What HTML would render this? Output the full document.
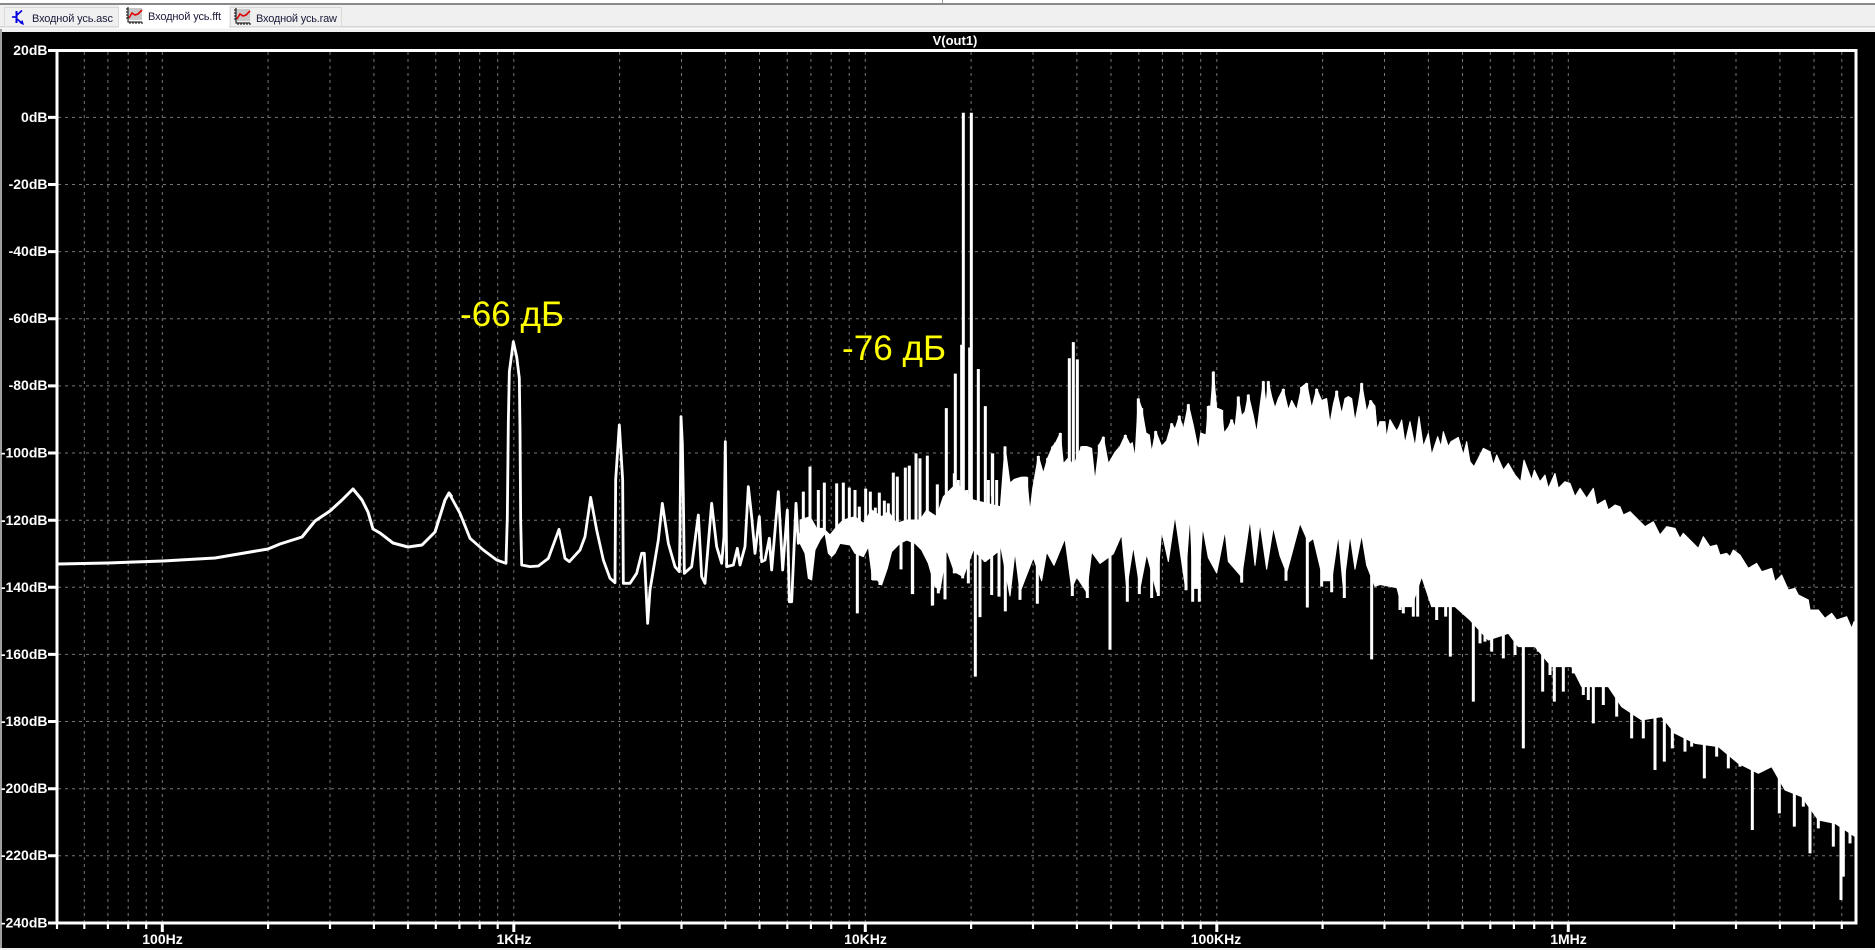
<!DOCTYPE html>
<html><head><meta charset="utf-8"><title>V(out1)</title>
<style>
html,body{margin:0;padding:0;background:#000;width:1875px;height:950px;overflow:hidden}
svg{display:block}
.s{vector-effect:non-scaling-stroke}
</style></head><body>
<svg xmlns="http://www.w3.org/2000/svg" width="1875" height="950" viewBox="0 0 1875 950">
<rect width="1875" height="950" fill="#000"/>
<!-- top chrome -->
<rect y="0" width="1875" height="32" fill="#f0f0f0"/>
<rect y="0" width="1875" height="3" fill="#fff"/>
<rect y="3" width="1875" height="2" fill="#8a8a8a"/>
<rect x="942" y="0" width="1" height="3" fill="#999"/>
<rect y="26" width="1875" height="1.5" fill="#d4d4d4"/>
<rect y="27.5" width="1875" height="1.5" fill="#fafafa"/>
<rect x="0" y="29" width="2" height="919" fill="#a0a0a0"/>
<rect y="948" width="1875" height="2" fill="#f0f0f0"/>
<!-- tabs -->
<rect x="4.5" y="7.5" width="114" height="19" fill="#f0f0f0" stroke="#d9d9d9"/>
<rect x="230.5" y="7.5" width="111" height="19" fill="#f0f0f0" stroke="#d9d9d9"/>
<rect x="119" y="5" width="110" height="23" fill="#fff"/>
<g font-family="'Liberation Sans','Noto Sans CJK SC',sans-serif" font-size="11" fill="#1a1a3a">
<text x="32" y="22" textLength="81">Входной усь.asc</text>
<text x="148" y="20" textLength="73">Входной усь.fft</text>
<text x="256" y="22" textLength="81">Входной усь.raw</text>
</g>
<!-- transistor icon -->
<g fill="none" stroke="#0000e0" stroke-width="1.6">
<path d="M12 17H16"/><path d="M16.5 11V23" stroke-width="2"/><path d="M17 15L22 10.5"/><path d="M17 19L23 24"/>
</g>
<path d="M24 25L19.5 23L22.5 20Z" fill="#0000e0"/>
<!-- chart icons -->
<g>
<rect x="128" y="8" width="14" height="12" fill="#c8c8c8"/>
<path d="M128 7V22H142M126 9H128M126 12H128M126 15H128M126 18H128M130 22V24M133 22V24M136 22V24M139 22V24M142 22V24" stroke="#000" fill="none"/>
<path d="M129 18L132 13L135 15L138 14L142 10" stroke="#e00000" stroke-width="1.6" fill="none"/>
</g>
<g transform="translate(108,1)">
<rect x="128" y="8" width="14" height="12" fill="#c8c8c8"/>
<path d="M128 7V22H142M126 9H128M126 12H128M126 15H128M126 18H128M130 22V24M133 22V24M136 22V24M139 22V24M142 22V24" stroke="#000" fill="none"/>
<path d="M129 18L132 13L135 15L138 14L142 10" stroke="#e00000" stroke-width="1.6" fill="none"/>
</g>
<!-- grid -->
<g stroke="#767676" stroke-width="1" stroke-dasharray="3 4" fill="none">
<path d="M84.3 52V922M107.9 52V922M128.2 52V922M146.2 52V922M162.3 52V922M268.1 52V922M330 52V922M373.9 52V922M408 52V922M435.8 52V922M459.4 52V922M479.7 52V922M497.7 52V922M513.8 52V922M619.6 52V922M681.5 52V922M725.4 52V922M759.5 52V922M787.3 52V922M810.9 52V922M831.2 52V922M849.2 52V922M865.3 52V922M971.1 52V922M1033 52V922M1076.9 52V922M1111 52V922M1138.8 52V922M1162.4 52V922M1182.7 52V922M1200.7 52V922M1216.8 52V922M1322.6 52V922M1384.5 52V922M1428.4 52V922M1462.5 52V922M1490.3 52V922M1513.9 52V922M1534.2 52V922M1552.2 52V922M1568.3 52V922M1674.1 52V922M1736 52V922M1779.9 52V922M1814 52V922M1841.8 52V922"/>
<path d="M58 117.4H1855M58 184.5H1855M58 251.6H1855M58 318.8H1855M58 385.9H1855M58 453H1855M58 520.2H1855M58 587.3H1855M58 654.4H1855M58 721.5H1855M58 788.7H1855M58 855.8H1855"/>
</g>
<!-- low-frequency trace -->
<path d="M58 564L108 563L163 561L215 558L268 549L280 544L302 537L315 521L330 511L342 500L353 489L362 500L368 512L373 529L380 533L393 543L408 547L422 545L435 532L445 500L449 493L452 497" fill="none" stroke="#fff" stroke-width="3" stroke-linejoin="round"/>
<g transform="translate(450,290) scale(.33333)" fill="#fff" stroke="#fff">
<path class="s" stroke-width="2.8" stroke-linejoin="round" fill="none" d="M0 615L30 670L60 745L100 780L140 810L168 820L172 680L175 395L178 245L190 155L200 200L208 265L210 420L212 690L215 825L240 830L265 828L295 805L327 718L345 805L358 815L390 780L405 740L422 622L440 720L460 810L480 865L495 878L497 570L508 405L518 570L520 880L540 880L560 850L575 790L583 790L593 1000L600 900L625 750L637 640L655 760L675 830L688 845L690 730L693 380L697 460L700 620L703 850L725 830L745 675L755 860L765 880L785 640L800 770L815 820L822 740L826 455L830 830L850 825L862 775L870 825L885 770L895 590L905 680L915 790L928 680L935 815L945 810L958 745L965 840L985 605L998 840L1012 660L1018 935L1025 935L1038 640L1045 760L1052 730"/>
</g>
<!-- band 800-1000 -->
<g transform="translate(800,440) scale(.33333)" fill="#fff" stroke="#fff">
<polygon class="s" stroke-width="1" stroke-linejoin="round" points="0,240 30,230 50,265 70,265 90,285 110,260 130,240 165,230 190,250 215,210 245,230 265,215 290,250 320,240 360,240 380,210 410,230 430,170 470,130 520,180 600,200 600,330 575,350 555,365 520,330 490,410 463,395 440,330 420,450 405,440 385,370 365,330 345,310 320,300 300,310 275,335 262,385 245,435 232,420 218,420 205,320 190,350 165,340 150,315 120,310 105,340 95,350 85,340 75,280 60,300 45,330 35,420 25,415 15,340 0,310"/>
<path class="s" stroke-width="3" fill="none" d="M10 155V300M30 80V300M55 150V280M73 128V280M110 130V300M130 128V290M148 143V300M165 150V300M178 200V330M197 146V300M211 155V300M226 203V300M238 158V300M253 182V300M265 190V290M280 98V300M292 110V300M316 83V280M328 77V280M348 40V290M360 55V290M382 47V300M412 133V300M463 100V200M475 120V200M500 150V200M520 180V250M550 200V250M578 40V250M565 120V250M590 120V250M172 520V300M218 420V340M240 435V340M303 388V300M337 462V300M398 495V400M415 460V400M435 478V330M463 400V300M488 415V300M505 430V300M575 465V300M597 470V300M555 365V300"/>
</g>
<!-- mid band -->
<g transform="translate(900,89.7) scale(.33333,.3836)" fill="#fff" stroke="#fff">
<polygon class="s" stroke-width="1" stroke-linejoin="round" points="300,1100 315,930 330,1025 345,1015 365,1010 380,1010 390,1100 398,1040 415,955 430,1000 443,960 458,930 467,920 481,895 490,975 505,960 520,980 545,930 560,930 575,935 585,1020 598,925 610,905 625,975 645,945 660,930 676,900 690,925 697,920 705,960 715,805 725,830 738,895 748,900 755,945 767,890 785,930 800,915 815,870 825,885 838,850 850,885 865,820 880,875 895,940 902,895 918,900 925,825 932,825 940,735 950,830 965,835 972,895 985,880 995,860 1005,880 1015,800 1025,850 1035,840 1045,795 1060,850 1070,895 1080,825 1090,760 1098,820 1105,760 1115,800 1125,830 1135,805 1150,780 1165,835 1175,810 1190,835 1205,775 1220,765 1235,830 1250,780 1265,810 1280,805 1290,870 1300,820 1310,785 1325,845 1335,805 1345,800 1355,805 1365,865 1375,820 1385,765 1400,840 1412,810 1425,825 1430,890 1440,865 1460,905 1470,860 1490,890 1500,875 1500,1300 1440,1290 1425,1295 1400,1240 1385,1160 1365,1250 1350,1160 1330,1300 1315,1160 1295,1280 1270,1280 1240,1170 1225,1180 1200,1130 1160,1260 1140,1215 1120,1140 1100,1250 1080,1130 1065,1240 1050,1120 1025,1270 1005,1250 985,1230 975,1150 950,1260 925,1220 908,1140 895,1300 880,1300 870,1110 855,1290 825,1110 805,1230 785,1150 770,1310 740,1210 720,1300 700,1190 680,1300 665,1160 640,1210 600,1235 575,1205 560,1310 530,1270 515,1300 495,1170 462,1240 440,1205 425,1280 400,1220 360,1310 345,1205 330,1320 300,1180"/>
<path class="s" stroke-width="3" fill="none" d="M190 60V1100M214 60V1100M166 740V1100M139 830V1100M235 728V1100M256 825V1100M185 665V1100M209 672V1100M520 658V1000M508 700V1000M532 703V1000M481 895V1060M315 930V1060M277 950V1060M226 1530V1100M630 1460V1100M1222 1350V1100M1415 1485V1100M38 1315V1150M97 1345V1150M240 1375V1150M682 1335V1150M878 1335V1150M898 1335V1150"/>
<path class="s" stroke-width="3" fill="none" d="M345 1015V1100M365 1010V1100M380 1010V1100M415 955V1100M443 960V1100M458 930V1100M467 920V1100M545 930V1100M560 930V1100M598 925V1100M610 905V1100M660 930V1100M676 900V1100M715 805V1100M725 830V1100M738 895V1100M767 890V1100M815 870V1100M838 850V1100M865 820V1100M925 825V1100M932 825V1100M940 735V1100M950 830V1100M965 835V1100M995 860V1100M1015 800V1100M1045 795V1100M1090 760V1100M1105 760V1100M1150 780V1100M1205 775V1100M1220 765V1100M1250 780V1100M1310 785V1100M1345 800V1100M1385 765V1100M1412 810V1100"/>
<path class="s" stroke-width="3" fill="none" d="M316 1360V1150M360 1330V1150M412 1340V1150M517 1320V1150M562 1325V1150M718 1315V1150M755 1325V1150M775 1320V1150M858 1305V1150M1025 1285V1150M1158 1280V1150M1265 1295V1150M1295 1310V1150M1333 1325V1150"/>
</g>
<!-- high-frequency band -->
<g transform="translate(1375,400) scale(.33333)" fill="#fff" stroke="#fff">
<polygon class="s" stroke-width="1" stroke-linejoin="round" points="0,300 0,25 8,105 15,65 30,65 35,120 45,60 65,100 80,60 90,130 105,65 120,140 132,50 145,140 160,100 170,165 188,110 198,140 205,95 220,140 228,125 250,112 265,165 275,125 285,185 297,200 325,145 345,155 355,195 365,165 385,210 400,190 420,225 437,245 447,180 470,240 478,210 495,245 510,225 520,265 540,220 550,265 570,245 585,250 600,290 615,265 635,295 655,265 665,315 690,300 700,330 720,315 735,320 745,345 765,335 810,380 835,365 855,405 875,380 900,385 915,415 925,400 970,445 985,410 1005,440 1025,435 1035,465 1055,460 1065,470 1075,450 1095,465 1120,505 1145,490 1160,515 1190,505 1200,545 1220,525 1240,570 1260,565 1270,585 1300,600 1305,630 1330,630 1350,655 1370,640 1385,660 1415,650 1430,685 1437,665 1441,668 1441,950"/>
<polygon class="s" stroke-width="1" stroke-linejoin="round" points="0,300 1441,950 1441,1310 1380,1270 1330,1260 1280,1190 1230,1170 1190,1100 1150,1120 1090,1090 1030,1040 960,1030 900,1000 860,950 800,960 740,920 700,860 620,860 590,800 530,800 480,740 430,740 400,700 340,720 285,660 240,620 200,620 170,620 140,530 110,620 80,620 60,540 0,540"/>
<path class="s" stroke-width="3" fill="none" d="M75 630v-250M85 640v-250M115 650v-250M128 650v-250M185 660v-250M212 650v-250M226 770v-250M295 905v-300M315 730v-250M330 725v-250M350 755v-250M385 775v-250M420 765v-250M445 1045v-350M490 755v-250M503 875v-250M525 825v-250M538 905v-250M565 875v-250M595 820v-250M625 885v-250M640 900v-250M655 970v-250M685 915v-250M725 950v-250M760 930v-250M770 1015v-250M805 1015v-250M818 910v-250M840 1110v-250M868 1085v-250M892 1045v-250M930 1055v-250M950 1040v-250M988 1135v-250M1025 1070v-250M1060 1105v-250M1095 1100v-250M1132 1290v-250M1195 1105v-250M1213 1240v-250M1258 1280v-250M1285 1220v-250M1305 1360v-250M1330 1285v-250M1355 1265v-250M1375 1340v-250M1398 1500v-350M1405 1430v-250M1425 1330v-250"/>
</g>
<!-- frame -->
<path d="M57 50.5H1856V923H57Z" fill="none" stroke="#fff" stroke-width="3"/>
<!-- ticks -->
<g stroke="#fff" stroke-width="3" fill="none">
<path d="M48 50.5H57M48 117.4H57M48 184.5H57M48 251.6H57M48 318.8H57M48 385.9H57M48 453H57M48 520.2H57M48 587.3H57M48 654.4H57M48 721.5H57M48 788.7H57M48 855.8H57M48 923H57"/>
<path stroke-width="2.2" d="M57 923V929M84.3 923V929M107.9 923V929M128.2 923V929M146.2 923V929M268.1 923V929M330 923V929M373.9 923V929M408 923V929M435.8 923V929M459.4 923V929M479.7 923V929M497.7 923V929M619.6 923V929M681.5 923V929M725.4 923V929M759.5 923V929M787.3 923V929M810.9 923V929M831.2 923V929M849.2 923V929M971.1 923V929M1033 923V929M1076.9 923V929M1111 923V929M1138.8 923V929M1162.4 923V929M1182.7 923V929M1200.7 923V929M1322.6 923V929M1384.5 923V929M1428.4 923V929M1462.5 923V929M1490.3 923V929M1513.9 923V929M1534.2 923V929M1552.2 923V929M1674.1 923V929M1736 923V929M1779.9 923V929M1814 923V929M1841.8 923V929"/>
<path d="M162.3 923V932M513.8 923V932M865.3 923V932M1216.8 923V932M1568.3 923V932"/>
</g>
<!-- axis labels -->
<g font-family="'Liberation Sans',sans-serif" font-weight="bold" font-size="14" fill="#fff" text-anchor="end">
<text x="47.5" y="55">20dB</text><text x="47.5" y="122">0dB</text><text x="47.5" y="189">-20dB</text><text x="47.5" y="256">-40dB</text><text x="47.5" y="323">-60dB</text><text x="47.5" y="390">-80dB</text><text x="47.5" y="457.5">-100dB</text><text x="47.5" y="525">-120dB</text><text x="47.5" y="592">-140dB</text><text x="47.5" y="659">-160dB</text><text x="47.5" y="726">-180dB</text><text x="47.5" y="793">-200dB</text><text x="47.5" y="860">-220dB</text><text x="47.5" y="927.5">-240dB</text>
</g>
<g font-family="'Liberation Sans',sans-serif" font-weight="bold" font-size="14" fill="#fff" text-anchor="middle">
<text x="162.5" y="944">100Hz</text><text x="514" y="944">1KHz</text><text x="865.5" y="944">10KHz</text><text x="1216" y="944">100KHz</text><text x="1568.5" y="944">1MHz</text>
<text x="955" y="45" font-size="13">V(out1)</text>
</g>
<!-- annotations -->
<g font-family="'Liberation Sans','Noto Sans CJK SC',sans-serif" font-size="35" fill="#ffff00">
<text x="460" y="326" textLength="104" lengthAdjust="spacingAndGlyphs">-66 дБ</text>
<text x="842" y="360" textLength="104" lengthAdjust="spacingAndGlyphs">-76 дБ</text>
</g>
</svg>
</body></html>
